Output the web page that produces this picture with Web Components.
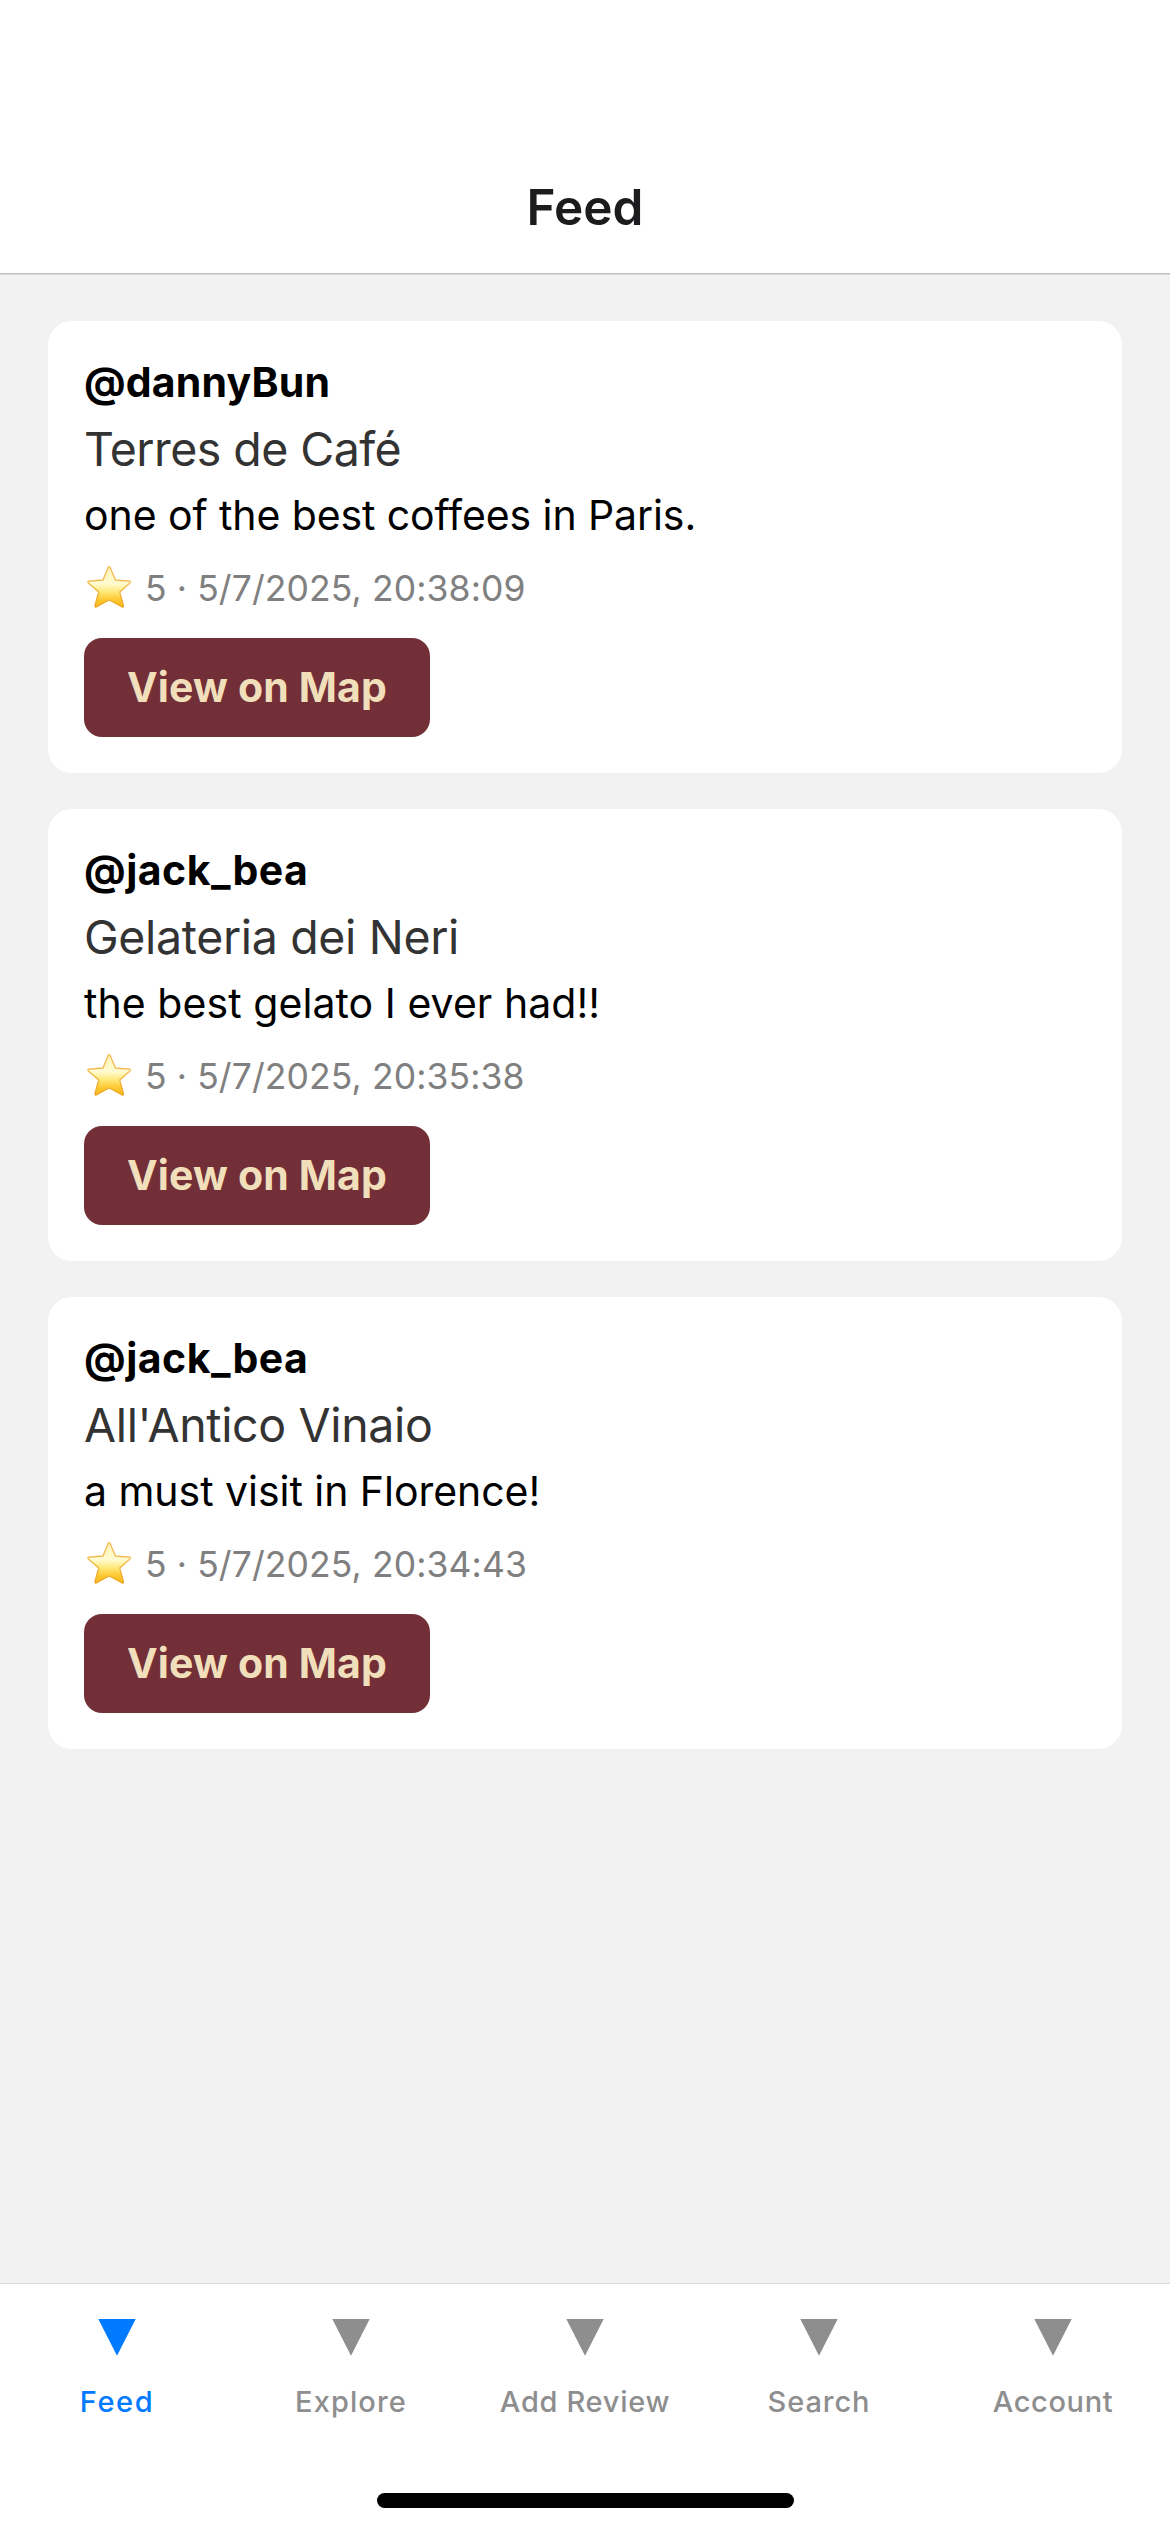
<!DOCTYPE html>
<html lang="en">
<head>
<meta charset="utf-8">
<meta name="viewport" content="width=device-width">
<title>Feed</title>
<style>
    body {
        margin: 0;
        font-family: Inter, "Liberation Sans", sans-serif;
    }
</style>
</head>
<body>
<app-screen>
    <screen-header slot="header">Feed</screen-header>

    <review-card style="--name-spacing: 0.18px; --place-spacing: -0.56px; --comment-spacing: -0.09px"
        rating="5" date="5/7/2025, 20:38:09">
        <span slot="user">@dannyBun</span>
        <span slot="place">Terres de Café</span>
        <span slot="comment">one of the best coffees in Paris.</span>
    </review-card>
    <review-card style="--comment-spacing: 0.06px" rating="5" date="5/7/2025, 20:35:38">
        <span slot="user">@jack_bea</span>
        <span slot="place">Gelateria dei Neri</span>
        <span slot="comment">the best gelato I ever had!!</span>
    </review-card>
    <review-card style="--comment-spacing: -0.04px" rating="5" date="5/7/2025, 20:34:43">
        <span slot="user">@jack_bea</span>
        <span slot="place">All'Antico Vinaio</span>
        <span slot="comment">a must visit in Florence!</span>
    </review-card>

    <tab-bar slot="footer">
        <tab-item active style="letter-spacing: 1.6px">Feed</tab-item>
        <tab-item style="letter-spacing: 1.1px">Explore</tab-item>
        <tab-item style="letter-spacing: 0.69px">Add Review</tab-item>
        <tab-item style="letter-spacing: 0.9px">Search</tab-item>
        <tab-item style="letter-spacing: 0.63px">Account</tab-item>
    </tab-bar>
</app-screen>

<script>
class AppScreen extends HTMLElement {
    constructor() {
        super();
        this.attachShadow({ mode: "open" });
        this.shadowRoot.innerHTML = `
            <style>
                :host {
                    display: flex;
                    flex-direction: column;
                    height: 2532px;
                    background-color: #f2f2f2;
                }
                main {
                    flex: 1;
                    display: flex;
                    flex-direction: column;
                    gap: 36px;
                    padding: 47px 48px;
                }
            </style>
            <slot name="header"></slot>
            <main><slot></slot></main>
            <slot name="footer"></slot>
        `;
    }
}

class ScreenHeader extends HTMLElement {
    constructor() {
        super();
        this.attachShadow({ mode: "open" });
        this.shadowRoot.innerHTML = `
            <style>
                :host {
                    display: block;
                    box-sizing: border-box;
                    height: 274px;
                    padding-top: 141px;
                    background-color: #fff;
                    border-bottom: 1px solid #bfc1c0;
                    box-shadow: 0 1px 0 #d8d8d8;
                    text-align: center;
                }
                h1 {
                    margin: 0;
                    font-size: 49.5px;
                    font-weight: 600;
                    line-height: 132px;
                    color: #1c1c1e;
                }
            </style>
            <h1><slot></slot></h1>
        `;
    }
}

class StarIcon extends HTMLElement {
    constructor() {
        super();
        this.attachShadow({ mode: "open" });
        this.shadowRoot.innerHTML = `
            <style>
                :host { display: block; width: 46px; height: 42px; }
                svg { display: block; }
            </style>
            <svg width="46" height="42" viewBox="0 0 46 42">
                <defs>
                    <linearGradient id="fill" x1="0" y1="0" x2="0" y2="1">
                        <stop offset="0" stop-color="#fff3b8"/>
                        <stop offset="0.42" stop-color="#fffbd0"/>
                        <stop offset="0.62" stop-color="#ffe878"/>
                        <stop offset="0.82" stop-color="#fdc92f"/>
                        <stop offset="1" stop-color="#f8b81f"/>
                    </linearGradient>
                    <linearGradient id="edge" x1="0" y1="0" x2="0" y2="1">
                        <stop offset="0" stop-color="#f1bb58"/>
                        <stop offset="0.5" stop-color="#f3b74a"/>
                        <stop offset="1" stop-color="#eda41f"/>
                    </linearGradient>
                </defs>
                <path d="M22.2 1.4Q23.2 -0.1 24.2 1.4L29.4 14L43.4 15.2Q45.4 15.6 44 17L33.7 25.9L37.4 39.6Q37.6 41.6 35.8 40.8L23.2 34L10.6 40.8Q8.8 41.6 9 39.6L12.7 25.9L2.4 17Q1 15.6 3 15.2L17 14Z"
                    fill="url(#fill)" stroke="url(#edge)" stroke-width="1.3" stroke-linejoin="round"/>
            </svg>
        `;
    }
}

class MapButton extends HTMLElement {
    constructor() {
        super();
        this.attachShadow({ mode: "open" });
        this.shadowRoot.innerHTML = `
            <style>
                :host { display: block; }
                button {
                    display: block;
                    width: 346px;
                    height: 99px;
                    padding: 0;
                    border: none;
                    border-radius: 18px;
                    background-color: #722f37;
                    color: #f1dfbb;
                    font: 700 41px/99px Inter, "Liberation Sans", sans-serif;
                    letter-spacing: 0.15px;
                }
            </style>
            <button type="button"><slot></slot></button>
        `;
    }
}

class ReviewCard extends HTMLElement {
    constructor() {
        super();
        this.attachShadow({ mode: "open" });
    }

    connectedCallback() {
        this.render();
    }

    render() {
        this.shadowRoot.innerHTML = `
            <style>
                :host {
                    display: block;
                    padding: 36px;
                    border-radius: 24px;
                    background-color: #fff;
                }
                .user {
                    font-size: 41px;
                    font-weight: 700;
                    line-height: 50px;
                    letter-spacing: var(--name-spacing, 0.5px);
                    color: #000;
                }
                .place {
                    margin-top: 12px;
                    font-size: 46.5px;
                    line-height: 60px;
                    letter-spacing: var(--place-spacing, -0.35px);
                    color: #333;
                }
                .comment {
                    margin-top: 12px;
                    font-size: 41px;
                    line-height: 48px;
                    letter-spacing: var(--comment-spacing, 0);
                    color: #000;
                }
                .meta {
                    display: flex;
                    align-items: center;
                    gap: 13px;
                    margin: 27px 0 30px 2px;
                    font-size: 35.5px;
                    line-height: 42px;
                    letter-spacing: 0.1px;
                    color: #808080;
                }
                .meta span {
                    padding-top: 2px;
                    margin-bottom: -2px;
                }
            </style>
            <div class="user"><slot name="user"></slot></div>
            <div class="place"><slot name="place"></slot></div>
            <div class="comment"><slot name="comment"></slot></div>
            <div class="meta">
                <star-icon></star-icon>
                <span>${this.getAttribute("rating")} · ${this.getAttribute("date")}</span>
            </div>
            <map-button>View on Map</map-button>
        `;
    }
}

class TabBar extends HTMLElement {
    constructor() {
        super();
        this.attachShadow({ mode: "open" });
        this.shadowRoot.innerHTML = `
            <style>
                :host {
                    display: flex;
                    flex-direction: column;
                    align-items: center;
                    justify-content: space-between;
                    box-sizing: border-box;
                    height: 249px;
                    padding-bottom: 24px;
                    background-color: #fff;
                    border-top: 1px solid #d8d8d8;
                }
                nav {
                    display: grid;
                    grid-template-columns: repeat(5, 1fr);
                    width: 100%;
                }
                .home-indicator {
                    width: 417px;
                    height: 15px;
                    border-radius: 8px;
                    background-color: #000;
                }
            </style>
            <nav><slot></slot></nav>
            <div class="home-indicator"></div>
        `;
    }
}

class TabItem extends HTMLElement {
    constructor() {
        super();
        this.attachShadow({ mode: "open" });
        this.shadowRoot.innerHTML = `
            <style>
                :host {
                    display: flex;
                    flex-direction: column;
                    align-items: center;
                    gap: 27px;
                    padding-top: 35px;
                    font-size: 29px;
                    font-weight: 500;
                    line-height: 38px;
                    white-space: nowrap;
                    color: #8e8e8f;
                }
                :host([active]) { color: #007aff; }
                svg { display: block; }
            </style>
            <svg width="38" height="37" viewBox="0 0 38 37">
                <path d="M0.3 0H37.7L19 36.8Z" fill="currentColor"/>
            </svg>
            <span><slot></slot></span>
        `;
    }
}

customElements.define("app-screen", AppScreen);
customElements.define("screen-header", ScreenHeader);
customElements.define("star-icon", StarIcon);
customElements.define("map-button", MapButton);
customElements.define("review-card", ReviewCard);
customElements.define("tab-bar", TabBar);
customElements.define("tab-item", TabItem);
</script>
</body>
</html>
